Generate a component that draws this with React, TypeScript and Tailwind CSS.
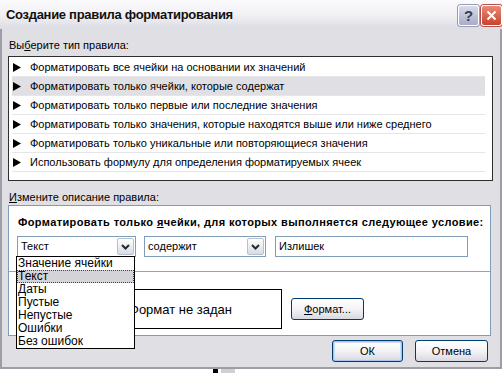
import React from 'react';

const ruleTypes = [
  'Форматировать все ячейки на основании их значений',
  'Форматировать только ячейки, которые содержат',
  'Форматировать только первые или последние значения',
  'Форматировать только значения, которые находятся выше или ниже среднего',
  'Форматировать только уникальные или повторяющиеся значения',
  'Использовать формулу для определения форматируемых ячеек',
];

const dropItems = ['Значение ячейки', 'Текст', 'Даты', 'Пустые', 'Непустые', 'Ошибки', 'Без ошибок'];

const Arrow: React.FC = () => (
  <svg width="8" height="9" viewBox="0 0 8 9" className="shrink-0">
    <polygon points="0,0 8,4.5 0,9" fill="#000" />
  </svg>
);

const DropButton: React.FC = () => (
  <div className="w-[17px] h-[17px] mr-[1px] flex items-center justify-center rounded-[2px] border border-[#b8bfcf] bg-gradient-to-b from-[#ffffff] to-[#d9dce6]">
    <svg width="9" height="6" viewBox="0 0 9 6">
      <path d="M1 1 L4.5 4.5 L8 1" stroke="#2a2a2a" strokeWidth="2" fill="none" />
    </svg>
  </div>
);

const XpButton: React.FC<{ label: React.ReactNode; width: string; isDefault?: boolean }> = ({ label, width, isDefault }) => (
  <div
    className={`${width} h-[22px] flex items-center justify-center rounded-[3px] border border-[#003c74] bg-gradient-to-b from-[#ffffff] via-[#f4f4f6] to-[#d8d8e0] ${
      isDefault ? 'shadow-[inset_0_0_0_1px_#a9c4f0,inset_0_0_0_2px_#cfdcf4]' : ''
    }`}
  >
    {label}
  </div>
);

export default function App() {
  return (
    <div className="w-[502px] h-[373px] overflow-hidden bg-white text-[11px] leading-[13px] text-black font-['Tahoma','Liberation_Sans',sans-serif]">
      {/* title bar */}
      <div className="h-[29px] flex items-center justify-between pl-[6px] bg-gradient-to-b from-[#fbfbfd] via-[#f1f1f5] to-[#dcdce4]">
        <span className="text-[13px] font-bold text-[#111] tracking-[-0.3px]">Создание правила форматирования</span>
        <div className="flex items-center gap-[2px] pt-[1px]">
          <div className="w-[21px] h-[21px] rounded-[3px] border border-white shadow-[0_0_0_1px_#9a9ab0] bg-gradient-to-b from-[#d9dbea] to-[#a9acc8] flex items-center justify-center text-[15px] font-bold text-[#3a3a50]">
            ?
          </div>
          <div className="w-[21px] h-[21px] rounded-[3px] border border-white shadow-[0_0_0_1px_#b05050] bg-gradient-to-b from-[#e88a74] to-[#c8412c] flex items-center justify-center">
            <svg width="11" height="11" viewBox="0 0 11 11">
              <path d="M1.5 1.5 L9.5 9.5 M9.5 1.5 L1.5 9.5" stroke="#fff" strokeWidth="2" />
            </svg>
          </div>
        </div>
      </div>

      {/* body */}
      <div className="h-[340px] flex flex-col bg-[#e0dfe3] border-x-2 border-b-2 border-[#9d9da6] pl-[6px] pr-[7px]">
        <div className="pt-[10px] pl-[1px]">
          Вы<span className="underline">б</span>ерите тип правила:
        </div>
        <div className="mt-[4px] h-[125px] border border-[#2f2f2f] bg-white pt-[1px] pl-[3px] pr-[7px]">
          {ruleTypes.map((t, i) => (
            <div
              key={t}
              className={`h-[19px] flex items-center gap-[9px] pl-[1px] border-b border-[#e6e5ea] ${i === 1 ? 'bg-[#e0dfe3]' : ''}`}
            >
              <Arrow />
              <span>{t}</span>
            </div>
          ))}
        </div>

        <div className="mt-[10px] pl-[1px]">
          <span className="underline">И</span>змените описание правила:
        </div>
        <div className="relative mt-[1px] h-[131px] mr-[2px] border border-[#7f9db9] bg-white">
          <div className="pt-[10px] pl-[9px] font-bold tracking-[0.38px] whitespace-nowrap">
            Форматировать только <span className="underline">я</span>чейки, для которых выполняется следующее условие:
          </div>
          <div className="mt-[7px] flex items-center pl-[8px]">
            <div className="w-[119px] h-[21px] flex items-center justify-between border border-[#7f9db9] bg-white pl-[3px]">
              <span>Текст</span>
              <DropButton />
            </div>
            <div className="ml-[8px] w-[122px] h-[21px] flex items-center justify-between border border-[#7f9db9] bg-white pl-[3px]">
              <span>содержит</span>
              <DropButton />
            </div>
            <div className="ml-[9px] w-[193px] h-[21px] flex items-center border border-[#7f9db9] bg-white pl-[3px]">
              Излишек
            </div>
          </div>
          <div className="mt-[14px] h-px bg-[#a0a0a8]" />
          <div className="mt-[17px] flex items-start pl-[70px]">
            <div className="w-[203px] h-[40px] border border-black flex items-center justify-center text-[13px]">
              Формат не задан
            </div>
            <div className="ml-[9px] mt-[9px]">
              <XpButton width="w-[73px]" label={<span><span className="underline">Ф</span>ормат...</span>} />
            </div>
          </div>

          {/* open dropdown list */}
          <div className="absolute left-[7px] top-[50px] w-[119px] h-[93px] border border-black bg-white flex flex-col">
            {dropItems.map((d, i) => (
              <div
                key={d}
                className={`h-[13px] leading-[13px] pl-[1px] text-[12px] ${
                  i === 1 ? 'bg-[#d4d4d8] outline-1 outline-dotted outline-offset-[-1px] outline-[#444]' : ''
                }`}
              >
                {d}
              </div>
            ))}
          </div>
        </div>

        <div className="mt-[4px] flex justify-end gap-[12px] pr-[5px]">
          <XpButton width="w-[71px]" label="ОК" isDefault />
          <XpButton width="w-[73px]" label="Отмена" />
        </div>
      </div>

      {/* bit of sheet below the dialog */}
      <div className="h-[4px] flex">
        <div className="ml-[213px] w-[5px] h-[4px] bg-black" />
        <div className="ml-[3px] w-[14px] h-[4px] bg-[#d0d0d0]" />
      </div>
    </div>
  );
}
